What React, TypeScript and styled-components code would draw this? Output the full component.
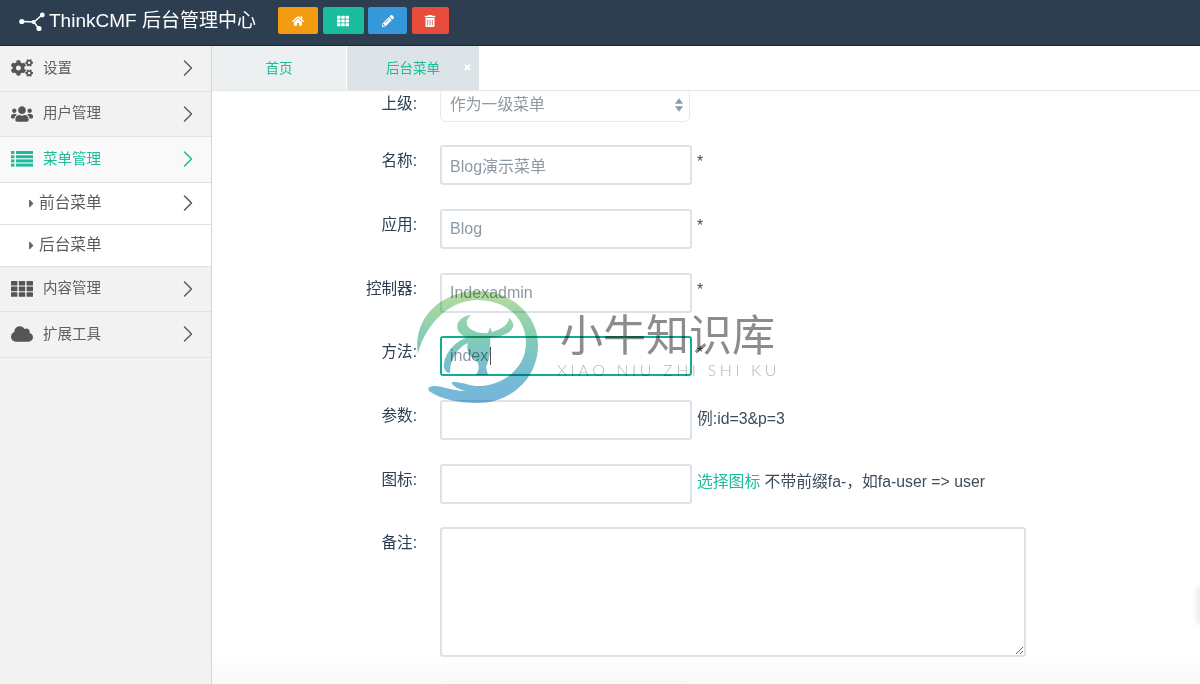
import React from "react";
import styled, { createGlobalStyle } from "styled-components";
import { FaCaretRight, FaCloud, FaCogs, FaHome, FaPencilAlt, FaTh, FaTimes, FaTrashAlt, FaUsers } from "react-icons/fa";
import { ChevronRight } from "lucide-react";

const GlobalStyle = createGlobalStyle`
  html, body {
    margin: 0;
    height: 100%;
    overflow: hidden;
    background: #fff;
    font-family: "Liberation Sans", "Noto Sans CJK SC", sans-serif;
  }
  * { box-sizing: border-box; }
`;

const Page = styled.div`
  position: relative;
  display: flex;
  flex-direction: column;
  height: 684px;
  overflow: hidden;
`;

const Header = styled.header`
  display: flex;
  align-items: center;
  flex: none;
  height: 46px;
  padding: 0 0 4px 19px;
  background: #2c3e50;
  border-bottom: 1px solid #1c2733;
`;

const Brand = styled.div`
  display: flex;
  align-items: center;
  gap: 4px;
  width: 259px;
  color: #fff;
  font-size: 19px;
  white-space: nowrap;
`;

const BrandName = styled.span`
  padding-bottom: 4px;
`;

const Actions = styled.div`
  display: flex;
  gap: 4.5px;
`;

const ActionButton = styled.div<{ $bg: string; $w: number }>`
  display: flex;
  align-items: center;
  justify-content: center;
  width: ${(p) => p.$w}px;
  height: 27px;
  border-radius: 2px;
  background: ${(p) => p.$bg};
  color: #fff;
  font-size: 12px;
`;

const Body = styled.div`
  display: flex;
  flex: 1;
  min-height: 0;
`;

const Sidebar = styled.aside`
  flex: none;
  width: 212px;
  background: #f2f2f2;
  border-right: 1px solid #d4d4d4;
`;

const NavRow = styled.div<{ $active?: boolean }>`
  display: flex;
  align-items: center;
  height: 45.5px;
  padding: 0 9px 0 11px;
  background: ${(p) => (p.$active ? "#f9f9f9" : "#f2f2f2")};
  border-bottom: 1px solid #e2e2e2;
  color: ${(p) => (p.$active ? "#1abc9c" : "#5f5f5f")};
  font-size: 14.5px;
`;

const NavIcon = styled.span<{ $active?: boolean }>`
  display: flex;
  align-items: center;
  justify-content: center;
  width: 22px;
  margin-right: 10px;
  font-size: 22px;
  color: ${(p) => (p.$active ? "#1abc9c" : "#555")};
`;

const NavLabel = styled.span`
  flex: 1;
  padding-bottom: 4px;
`;

const SubRow = styled.div`
  display: flex;
  align-items: center;
  height: 42px;
  padding: 0 9px 0 26px;
  background: #fff;
  border-bottom: 1px solid #e2e2e2;
  color: #5a5a5a;
  font-size: 15.7px;
`;

const RowSpacer = styled.span`
  width: 28px;
  height: 28px;
`;

const SubCaret = styled.span`
  display: flex;
  width: 13px;
  margin-left: -1px;
  margin-right: 1px;
  font-size: 13px;
  color: #666;
`;

const Main = styled.main`
  display: flex;
  flex: 1;
  flex-direction: column;
  min-width: 0;
`;

const Tabs = styled.div`
  display: flex;
  flex: none;
  gap: 1px;
  height: 45px;
  border-bottom: 1px solid #e6e6e6;
`;

const Tab = styled.div<{ $active?: boolean; $w: number }>`
  position: relative;
  display: flex;
  align-items: center;
  justify-content: center;
  width: ${(p) => p.$w}px;
  padding-bottom: 2px;
  background: ${(p) => (p.$active ? "#dde4e8" : "#ecf0f1")};
  color: #1abc9c;
  font-size: 13.5px;
`;

const TabClose = styled.span`
  position: absolute;
  top: 17px;
  right: 7px;
  display: flex;
  color: #fff;
  font-size: 9px;
`;

const Content = styled.div`
  flex: 1;
  min-height: 0;
  overflow: hidden;
`;

const Form = styled.form`
  display: flex;
  flex-direction: column;
  gap: 23.7px;
  margin-top: -3.4px;
`;

const Row = styled.div`
  display: flex;
  align-items: flex-start;
`;

const Label = styled.label`
  flex: none;
  width: 205px;
  margin-right: 23px;
  padding-top: 5px;
  color: #2c3e50;
  font-size: 15.6px;
  line-height: 22px;
  text-align: right;
`;

const Field = styled.div`
  position: relative;
  flex: none;
  display: flex;
`;

const TextInput = styled.input<{ $focus?: boolean }>`
  width: 252px;
  height: 40px;
  padding: 0 8px;
  border: 2px solid ${(p) => (p.$focus ? "#10ae8e" : "#dbe3ea")};
  border-radius: 3px;
  outline: none;
  background: transparent;
  color: #8d99a4;
  font: 16px/22px "Liberation Sans", "Noto Sans CJK SC", sans-serif;
`;

const SelectBox = styled.select`
  appearance: none;
  width: 250px;
  height: 34px;
  padding: 0 9px;
  border: 1px solid #e3e9ee;
  border-radius: 6px;
  outline: none;
  background: #fff;
  color: #8d99a4;
  font: 15.8px "Liberation Sans", "Noto Sans CJK SC", sans-serif;
`;

const SelectArrows = styled.svg`
  position: absolute;
  top: 10px;
  right: 7px;
`;

const Caret = styled.span`
  position: absolute;
  top: 11px;
  left: 50px;
  width: 1px;
  height: 18px;
  background: #555;
`;

const Notes = styled.textarea`
  display: block;
  width: 586px;
  height: 130px;
  border: 2px solid #dbe3ea;
  border-radius: 3px;
  outline: none;
  resize: both;
`;

const Help = styled.span`
  align-self: center;
  margin-left: 5px;
  padding-bottom: 6px;
  color: #3d4c5a;
  font-size: 15.8px;
  white-space: nowrap;
`;

const HelpLink = styled.span`
  color: #1abc9c;
`;

const Watermark = styled.div`
  position: absolute;
  top: 275px;
  left: 410px;
  display: flex;
  align-items: flex-start;
  mix-blend-mode: multiply;
  pointer-events: none;
`;

const WatermarkText = styled.div`
  margin: 27px 0 0 12px;
  color: #8c8c8c;
`;

const WatermarkName = styled.div`
  margin-left: 3px;
  font: 400 43px/60px "Noto Sans CJK SC", sans-serif;
  white-space: nowrap;
`;

const WatermarkPinyin = styled.div`
  margin-top: -2px;
  color: #b5b5b5;
  font: 300 16px Lato, sans-serif;
  letter-spacing: 3.6px;
  white-space: nowrap;
`;

const BottomFade = styled.div`
  position: absolute;
  right: 0;
  bottom: 0;
  left: 212px;
  height: 30px;
  background: linear-gradient(rgba(248, 248, 248, 0), rgba(248, 248, 248, 0.9));
  pointer-events: none;
`;

const EdgeShadow = styled.div`
  position: absolute;
  top: 585px;
  right: -8px;
  width: 12px;
  height: 40px;
  border-radius: 6px;
  background: #eee;
  filter: blur(2px);
`;

// font-awesome 4 style list, four thick rows with a dot column
const ListIcon = () => (
  <svg width="22" height="16" viewBox="0 0 22 16" fill="currentColor">
    {[0, 4.2, 8.4, 12.6].map((y) => (
      <g key={y}>
        <rect x="0" y={y} width="3.4" height="3" />
        <rect x="5" y={y} width="17" height="3" />
      </g>
    ))}
  </svg>
);

const GridIcon = () => (
  <svg width="22" height="16" viewBox="0 0 22 16" fill="currentColor">
    {[0, 5.6, 11.2].map((y) =>
      [0, 7.8, 15.6].map((x) => <rect key={`${x}-${y}`} x={x} y={y} width="6.4" height="4.6" rx="0.6" />),
    )}
  </svg>
);

const NAV_BEFORE = [
  { label: "设置", icon: <FaCogs /> },
  { label: "用户管理", icon: <FaUsers /> },
];

const NAV_AFTER = [
  { label: "内容管理", icon: <GridIcon /> },
  { label: "扩展工具", icon: <FaCloud /> },
];

const NavArrow = () => <ChevronRight size={28} strokeWidth={1.3} />;

const NavItem = ({ label, icon, active }: { label: string; icon: React.ReactNode; active?: boolean }) => (
  <NavRow $active={active}>
    <NavIcon $active={active}>{icon}</NavIcon>
    <NavLabel>{label}</NavLabel>
    <NavArrow />
  </NavRow>
);

const NetworkLogo = () => (
  <svg width="26" height="20" viewBox="0 0 26 20" fill="#fff" stroke="#fff">
    <path d="M3 10.5 L15 11 L23 4 M15 11 L20 18" fill="none" strokeWidth="1.5" />
    <circle cx="2.8" cy="10.5" r="2.6" stroke="none" />
    <circle cx="14.5" cy="11" r="2" stroke="none" />
    <circle cx="23.3" cy="4" r="2.4" stroke="none" />
    <circle cx="20" cy="17.6" r="2.6" stroke="none" />
  </svg>
);

const BullLogo = () => (
  <svg width="135" height="135" viewBox="0 0 135 135">
    <defs>
      <linearGradient id="wm" gradientUnits="userSpaceOnUse" x1="0" y1="16" x2="0" y2="128">
        <stop offset="0" stopColor="#b8dd9c" />
        <stop offset="0.4" stopColor="#84cdb4" />
        <stop offset="0.75" stopColor="#74bbd4" />
        <stop offset="1" stopColor="#78b6da" />
      </linearGradient>
    </defs>
    <path
      fill="url(#wm)"
      d="M8 79 C2 45 30 16 67 16 C102 16 128 40 128 70 C128 104 100 128 68 128 C48 128 30 124 19 116 C16 111 24 110 32 112 C40 114 48 116 55 116 C46 113 41 110 42 107 C52 106 60 112 72 111 C95 109 116 92 116 68 C116 42 95 25 67 25 C34 25 12 58 8 79 Z"
    />
    <path
      fill="url(#wm)"
      d="M61 40 C50 41 44 50 49 57 C52 61 56 62 60 63 L80 63 C88 62 100 60 103 52 C104 49 102 45 99 43 C99 49 92 54 82 57 L80 52 L78 58 C70 59 60 56 57 50 C56 46 58 43 61 40 Z"
    />
    <path
      fill="url(#wm)"
      d="M58 62 L80 62 C81 72 80 84 76 92 L78 100 L66 100 C70 94 70 88 64 84 C58 80 56 74 58 68 C48 72 40 84 40 98 C36 98 33 94 34 88 C36 76 46 66 58 62 Z"
    />
  </svg>
);

export default function App() {
  return (
    <>
      <GlobalStyle />
      <Page>
        <Header>
          <Brand>
            <NetworkLogo />
            <BrandName>ThinkCMF 后台管理中心</BrandName>
          </Brand>
          <Actions>
            <ActionButton $bg="#f39c12" $w={40}><FaHome /></ActionButton>
            <ActionButton $bg="#1abc9c" $w={41}><FaTh /></ActionButton>
            <ActionButton $bg="#3498db" $w={39}><FaPencilAlt /></ActionButton>
            <ActionButton $bg="#e74c3c" $w={37}><FaTrashAlt /></ActionButton>
          </Actions>
        </Header>
        <Body>
          <Sidebar>
            {NAV_BEFORE.map((item) => (
              <NavItem key={item.label} {...item} />
            ))}
            <NavItem label="菜单管理" icon={<ListIcon />} active />
            <SubRow>
              <SubCaret><FaCaretRight /></SubCaret>
              <NavLabel>前台菜单</NavLabel>
              <NavArrow />
            </SubRow>
            <SubRow>
              <SubCaret><FaCaretRight /></SubCaret>
              <NavLabel>后台菜单</NavLabel>
              <RowSpacer />
            </SubRow>
            {NAV_AFTER.map((item) => (
              <NavItem key={item.label} {...item} />
            ))}
          </Sidebar>
          <Main>
            <Tabs>
              <Tab $w={134}>首页</Tab>
              <Tab $w={132} $active>
                后台菜单
                <TabClose><FaTimes /></TabClose>
              </Tab>
            </Tabs>
            <Content>
              <Form>
                <Row>
                  <Label>上级:</Label>
                  <Field>
                    <SelectBox defaultValue="0">
                      <option value="0">作为一级菜单</option>
                    </SelectBox>
                    <SelectArrows width="8" height="14" viewBox="0 0 9 15" fill="#8d99a4">
                      <path d="M4.5 0 L9 6 H0 Z M0 9 H9 L4.5 15 Z" />
                    </SelectArrows>
                  </Field>
                </Row>
                <Row>
                  <Label>名称:</Label>
                  <Field><TextInput readOnly defaultValue="Blog演示菜单" /></Field>
                  <Help>*</Help>
                </Row>
                <Row>
                  <Label>应用:</Label>
                  <Field><TextInput readOnly defaultValue="Blog" /></Field>
                  <Help>*</Help>
                </Row>
                <Row>
                  <Label>控制器:</Label>
                  <Field><TextInput readOnly defaultValue="Indexadmin" /></Field>
                  <Help>*</Help>
                </Row>
                <Row>
                  <Label>方法:</Label>
                  <Field>
                    <TextInput $focus readOnly defaultValue="index" />
                    <Caret />
                  </Field>
                  <Help>*</Help>
                </Row>
                <Row>
                  <Label>参数:</Label>
                  <Field><TextInput readOnly /></Field>
                  <Help>例:id=3&amp;p=3</Help>
                </Row>
                <Row>
                  <Label>图标:</Label>
                  <Field><TextInput readOnly /></Field>
                  <Help>
                    <HelpLink>选择图标</HelpLink> 不带前缀fa-，如fa-user =&gt; user
                  </Help>
                </Row>
                <Row>
                  <Label>备注:</Label>
                  <Field><Notes readOnly /></Field>
                </Row>
                <Row>
                  <Label />
                  <Field>
                    <SelectBox />
                  </Field>
                </Row>
              </Form>
            </Content>
          </Main>
        </Body>
        <Watermark>
          <BullLogo />
          <WatermarkText>
            <WatermarkName>小牛知识库</WatermarkName>
            <WatermarkPinyin>XIAO NIU ZHI SHI KU</WatermarkPinyin>
          </WatermarkText>
        </Watermark>
        <BottomFade />
        <EdgeShadow />
      </Page>
    </>
  );
}
